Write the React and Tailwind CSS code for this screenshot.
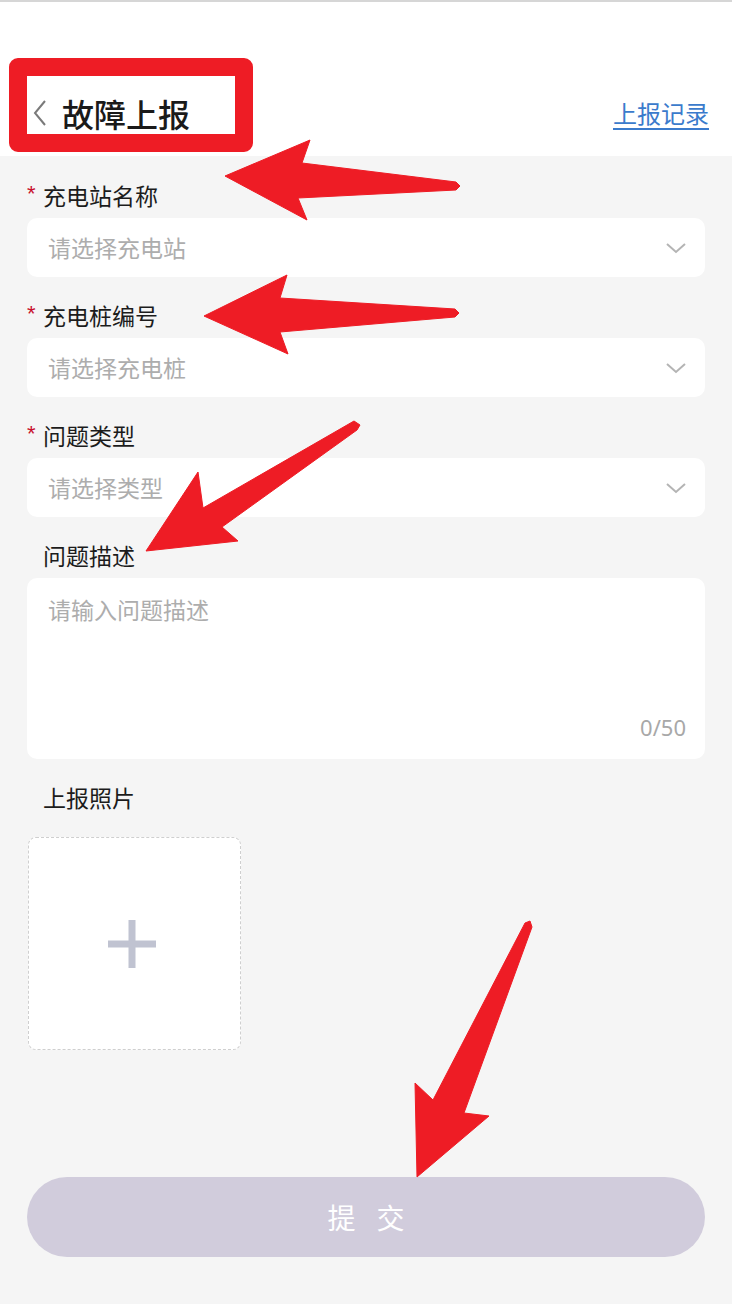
import { useState } from "react";

const font = { fontFamily: '"Noto Sans CJK SC", "Noto Sans", sans-serif' };

function Chevron() {
  return (
    <svg width="22" height="14" viewBox="0 0 22 14" className="shrink-0">
      <path d="M2 3 L11 11 L20 3" fill="none" stroke="#b4b4b4" strokeWidth="2" />
    </svg>
  );
}

function Label({ text, required }) {
  return (
    <div className="h-[30px] flex items-center">
      <span
        className={`w-[16px] text-[22px] leading-none text-[#c8102e] -mt-[2px] ${required ? "" : "invisible"}`}
        style={{ fontFamily: '"Liberation Sans", sans-serif' }}
      >
        *
      </span>
      <span className="text-[23px] text-[#1c1c1c] leading-none">{text}</span>
    </div>
  );
}

function SelectField({ label, placeholder }) {
  return (
    <div>
      <Label text={label} required />
      <div className="mt-[8px] h-[59px] bg-white rounded-[10px] flex items-center justify-between pl-[21px] pr-[18px]">
        <span className="text-[23px] text-[#adadad]">{placeholder}</span>
        <Chevron />
      </div>
    </div>
  );
}

export default function App() {
  const [desc, setDesc] = useState("");

  return (
    <div className="relative w-[732px] h-[1304px] bg-[#f5f5f5] overflow-hidden" style={font}>
      {/* HEADER */}
      <header className="h-[156px] bg-white border-t-2 border-[#d6d6d6] flex items-center justify-between pl-[32px] pr-[23px] pt-[88px] pb-[20px]">
        <div className="flex items-center gap-[14px]">
          <svg width="16" height="28" viewBox="0 0 16 28">
            <path d="M13 2 L3 14 L13 26" fill="none" stroke="#7a7a7a" strokeWidth="2" />
          </svg>
          <span className="text-[32px] font-medium text-[#1a1a1a] leading-none">故障上报</span>
        </div>
        <a className="text-[24px] text-[#3b7bcc] underline underline-offset-[5px] leading-none">上报记录</a>
      </header>

      {/* FORM */}
      <div className="px-[27px] pt-[24px] flex flex-col gap-[23px]">
        <SelectField label="充电站名称" placeholder="请选择充电站" />
        <SelectField label="充电桩编号" placeholder="请选择充电桩" />
        <SelectField label="问题类型" placeholder="请选择类型" />

        <div>
          <Label text="问题描述" />
          <div className="mt-[8px] h-[181px] bg-white rounded-[10px] relative">
            <textarea
              value={desc}
              onChange={(e) => setDesc(e.target.value.slice(0, 50))}
              placeholder="请输入问题描述"
              className="w-full h-full resize-none bg-transparent outline-none px-[21px] pt-[14px] text-[23px] placeholder-[#adadad]"
            />
            <span className="absolute right-[19px] bottom-[21px] text-[22px] text-[#a8a8a8] leading-none" style={{ fontFamily: '"Noto Sans", sans-serif' }}>
              {desc.length}/50
            </span>
          </div>
        </div>

        <div>
          <Label text="上报照片" />
          <div className="mt-[25px] ml-[1px] w-[213px] h-[213px] bg-white rounded-[8px] border border-dashed border-[#cfcfcf] flex items-center justify-center">
            <svg width="50" height="50" viewBox="0 0 50 50" className="mr-[6px]">
              <path d="M25 1 V49 M1 25 H49" stroke="#c0c3d1" strokeWidth="7" />
            </svg>
          </div>
        </div>
      </div>

      {/* SUBMIT */}
      <div className="px-[27px] mt-[127px]">
        <button className="w-full h-[80px] rounded-full bg-[#d1ccdc] text-white text-[28px] tracking-[21px] pl-[21px]">
          提交
        </button>
      </div>

      {/* ANNOTATIONS */}
      <div className="absolute left-[9px] top-[58px] w-[244px] h-[94px] border-[18px] border-[#ee1c25] rounded-[9px] pointer-events-none" />
      <svg className="absolute inset-0 pointer-events-none" width="732" height="1304" viewBox="0 0 732 1304">
        <g fill="#ee1c25" stroke="#ee1c25" strokeWidth="1" strokeLinejoin="round">
          <polygon points="225,176 310,140 302,163 456,182 460,186 456,190 298,198 307,220" />
          <polygon points="204,316 287,275 280,298 455,309 459,313 455,317 280,332 288,354" />
          <polygon points="146,551 198,472 203,508 354,421 360,425 357,430 222,527 238,541" />
          <polygon points="417,1177 415,1083 433,1100 525,923 530,921 532,927 464,1113 489,1116" />
        </g>
      </svg>
    </div>
  );
}
